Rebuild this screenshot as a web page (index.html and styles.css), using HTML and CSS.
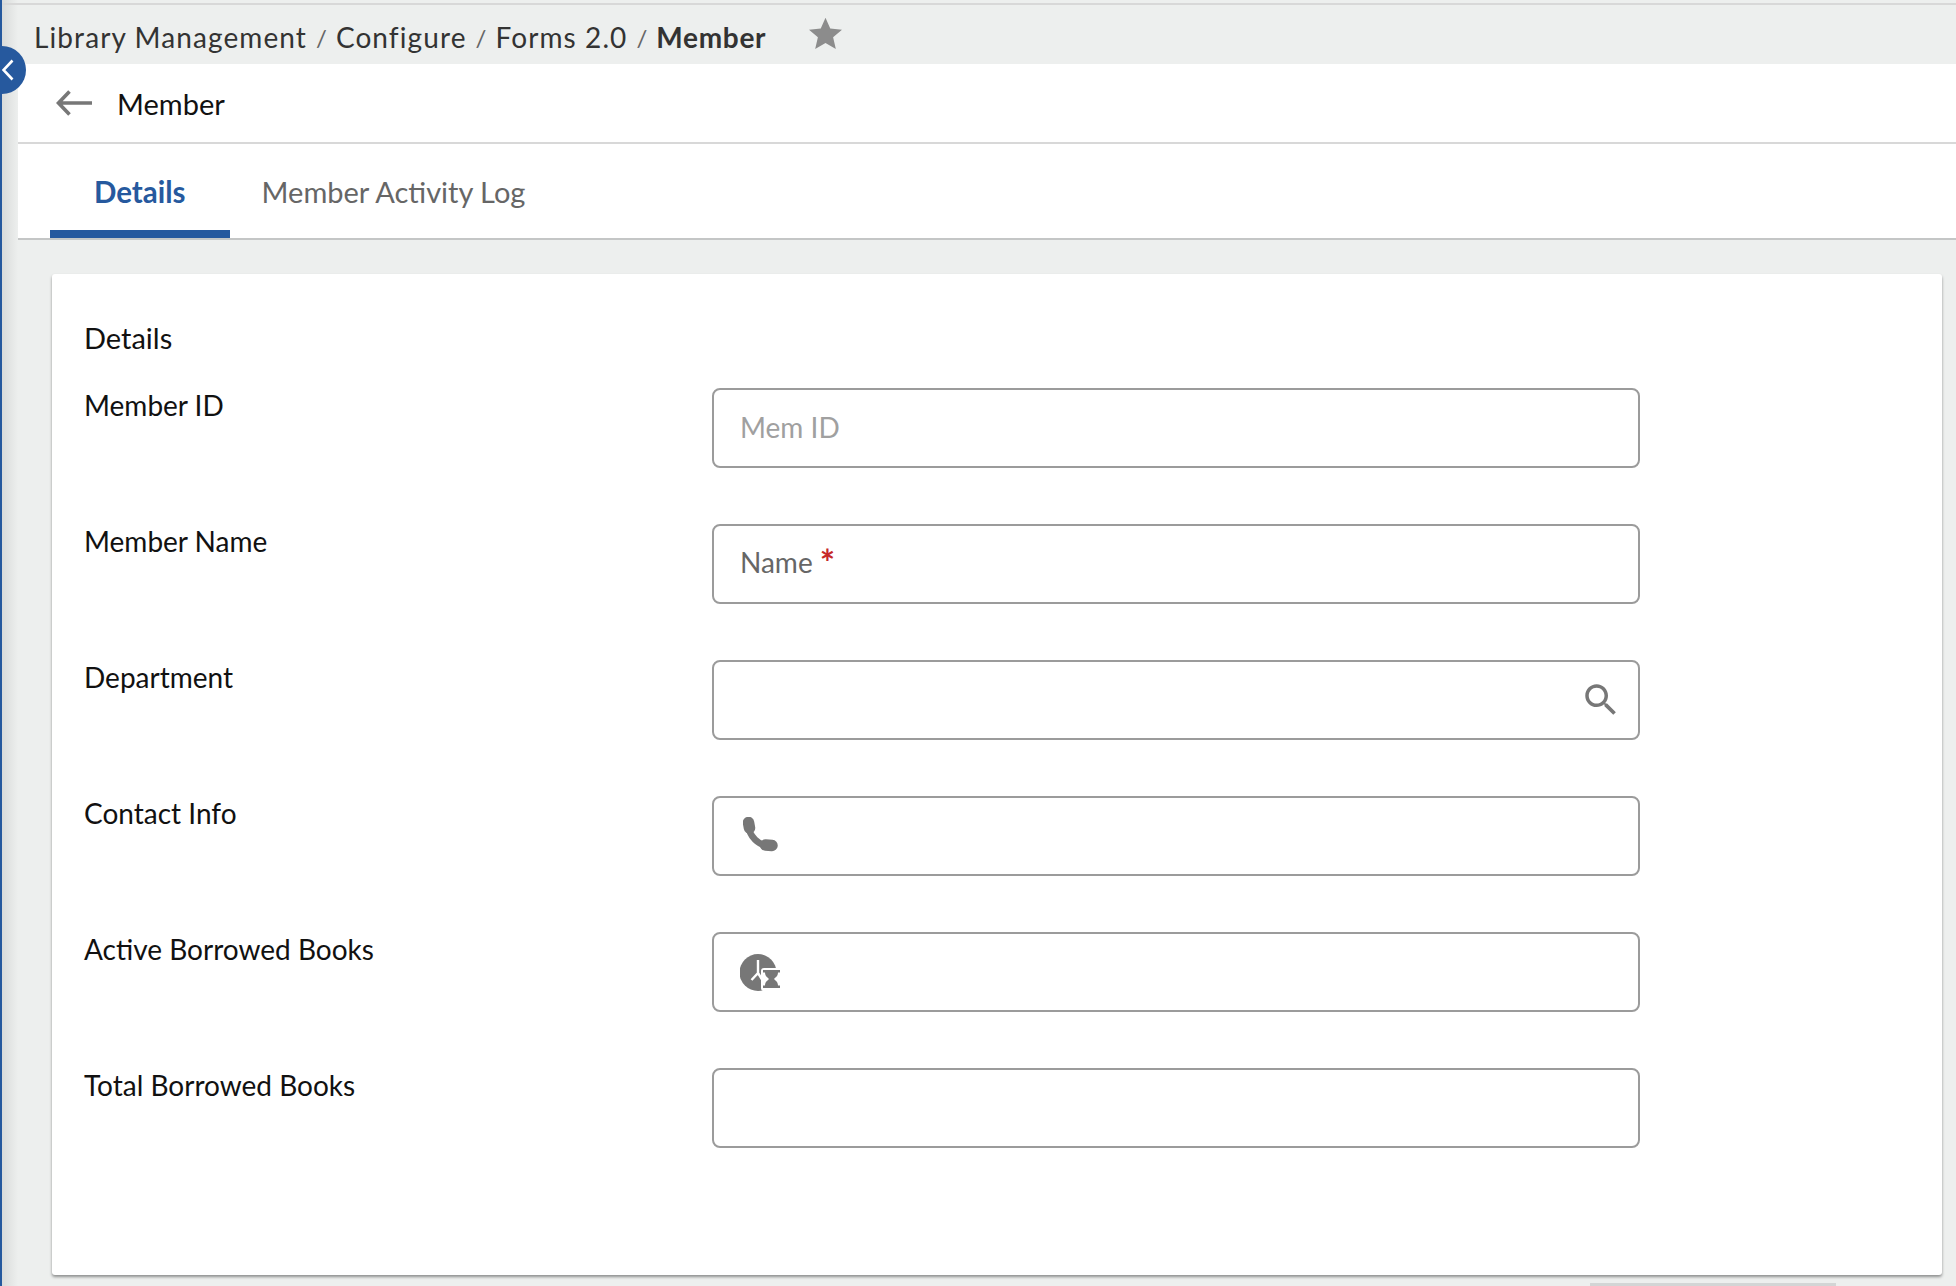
FILE: index.html
```html
<!DOCTYPE html>
<html lang="en">
<head>
    <meta charset="UTF-8">
    <title>Member</title>
    <link rel="stylesheet" href="styles.css">
</head>
<body>

<div class="shell">
    <div class="rail"></div>
    <button class="rail-toggle" type="button" aria-label="Collapse">
        <svg width="12" height="22" viewBox="0 0 12 22"><path d="M10.5 1.5 1.5 11l9 9.5" fill="none" stroke="#fff" stroke-width="2.6"/></svg>
    </button>

    <div class="content">
        <div class="breadcrumb">
            <span class="crumb">Library Management</span>
            <span class="crumb-sep">/</span>
            <span class="crumb">Configure</span>
            <span class="crumb-sep">/</span>
            <span class="crumb">Forms 2.0</span>
            <span class="crumb-sep">/</span>
            <span class="crumb crumb--current">Member</span>
            <svg class="star" width="35" height="33" viewBox="0 0 24 23"><path d="M12 0.5l3.3 7.6 8.2.7-6.2 5.4 1.9 8.1L12 18.1l-7.2 4.2 1.9-8.1L.5 8.8l8.2-.7z" fill="#8c8c8c"/></svg>
        </div>

        <div class="page">
            <div class="page-title">
                <svg class="back" width="36" height="26" viewBox="0 0 36 26"><path d="M36 13H3M13.5 1.500 2.500 13l11 11.500" fill="none" stroke="#777" stroke-width="3.6"/></svg>
                <span>Member</span>
            </div>
            <div class="tabs">
                <div class="tab tab--active">Details</div>
                <div class="tab">Member Activity Log</div>
            </div>
        </div>

        <div class="card">
            <div class="section-title">Details</div>

            <div class="form-row">
                <label class="form-label">Member ID</label>
                <div class="field"><input class="field-input" type="text" placeholder="Mem ID"></div>
            </div>
            <div class="form-row">
                <label class="form-label">Member Name</label>
                <div class="field"><span class="field-hint">Name</span><span class="required">*</span></div>
            </div>
            <div class="form-row">
                <label class="form-label">Department</label>
                <div class="field">
                    <input class="field-input" type="text">
                    <svg class="icon-search" width="42" height="42" viewBox="0 0 24 24"><path fill="#777" d="M15.5 14h-.79l-.28-.27C15.41 12.59 16 11.11 16 9.5 16 5.91 13.09 3 9.5 3S3 5.91 3 9.5 5.91 16 9.5 16c1.61 0 3.09-.59 4.23-1.57l.27.28v.79l5 4.99L20.49 19l-4.99-5zm-6 0C7.01 14 5 11.99 5 9.5S7.01 5 9.5 5 14 7.01 14 9.5 11.99 14 9.5 14z"/></svg>
                </div>
            </div>
            <div class="form-row">
                <label class="form-label">Contact Info</label>
                <div class="field">
                    <svg class="icon-phone" width="35" height="35" viewBox="0 0 35 35">
                        <path d="M5.500 8C6 19 15 29 28 29" fill="none" stroke="#777" stroke-width="6.500"/>
                        <path d="M5.500 5.500 6.500 11M22.500 28l6.500.5" fill="none" stroke="#777" stroke-width="11.500" stroke-linecap="round"/>
                    </svg>
                </div>
            </div>
            <div class="form-row">
                <label class="form-label">Active Borrowed Books</label>
                <div class="field">
                    <svg class="icon-pending" width="43" height="37" viewBox="0 0 43 37">
                        <circle cx="18" cy="18.500" r="18.500" fill="#777"/>
                        <rect x="21" y="14" width="22" height="23" rx="3" fill="#fff"/>
                        <path d="M18 6v13L11.500 26M18 19l5 8" fill="none" stroke="#fff" stroke-width="2.400"/>
                        <path d="M23 16h17v2.500h-2c0 4-3 5-4 6.500 1 1.500 4 2.500 4 6.500h2V34H23v-2.500h2c0-4 3-5 4-6.500-1-1.500-4-2.500-4-6.500h-2z" fill="#777"/>
                    </svg>
                </div>
            </div>
            <div class="form-row">
                <label class="form-label">Total Borrowed Books</label>
                <div class="field"><input class="field-input" type="text"></div>
            </div>
        </div>
    </div>
</div>

<div class="peek"></div>

</body>
</html>
```

FILE: styles.css
```css
html, body {
    margin: 0;
    height: 1286px;
    overflow: hidden;
    background-color: #edefee;
    font-family: "Lato", "Liberation Sans", sans-serif;
}
.shell {
    display: flex;
    position: relative;
    height: 1286px;
}
.rail {
    width: 2px;
    flex: none;
    background-color: #26599e;
}
.rail-toggle {
    position: absolute;
    left: -22px;
    top: 46px;
    z-index: 2;
    width: 48px;
    height: 48px;
    padding: 0 0 0 24px;
    border: 0;
    border-radius: 50%;
    background-color: #26599e;
    display: flex;
    align-items: center;
}
.content {
    flex: 1;
    min-width: 0;
    background: linear-gradient(to right, #d9dbda 0, #edefee 16px);
}

.breadcrumb {
    height: 61px;
    margin-top: 3px;
    padding: 5px 0 0 32px;
    display: flex;
    align-items: center;
    gap: 9px;
    border-top: 2px solid #d8d8d8;
    box-sizing: border-box;
    font-size: 28px;
    letter-spacing: 1.1px;
    color: #333;
}
.crumb-sep {
    color: #666;
    font-size: 24px;
    letter-spacing: 0;
}
.crumb--current {
    font-weight: 700;
    letter-spacing: 0.7px;
}
.star {
    margin-left: 33px;
    margin-bottom: 8px;
}

.page {
    margin-left: 16px;
    background-color: #fff;
}
.page-title {
    height: 80px;
    box-sizing: border-box;
    display: flex;
    align-items: center;
    gap: 25px;
    padding-left: 38px;
    border-bottom: 2px solid #d8d8d8;
    font-size: 29px;
    color: #111;
}
.tabs {
    height: 96px;
    box-sizing: border-box;
    display: flex;
    padding-left: 32px;
    border-bottom: 2px solid #c4c6c6;
}
.tab {
    padding: 0 32px;
    line-height: 96px;
    font-size: 29px;
    color: #666;
}
.tab--active {
    padding: 0 44px;
    font-size: 29.5px;
    font-weight: 700;
    color: #26599e;
    border-bottom: 8px solid #26599e;
}

.card {
    margin: 34px 14px 0 50px;
    height: 1001px;
    box-sizing: border-box;
    padding: 47px 32px 0;
    background-color: #fff;
    box-shadow: 0 2px 3px rgba(0, 0, 0, 0.4);
    border-radius: 3px;
}
.section-title {
    font-size: 29px;
    line-height: 34px;
    color: #111;
}
.form-row {
    display: flex;
    height: 136px;
}
.section-title + .form-row {
    margin-top: 33px;
}
.form-label {
    width: 628px;
    flex: none;
    font-size: 28px;
    line-height: 34px;
    color: #111;
}
.field {
    width: 928px;
    height: 80px;
    box-sizing: border-box;
    padding: 0 26px;
    display: flex;
    align-items: center;
    border: 2px solid #9b9b9b;
    border-radius: 8px;
}
.field-input {
    flex: 1;
    min-width: 0;
    border: 0;
    padding: 0 0 2px;
    outline: 0;
    font: inherit;
    font-size: 28px;
    color: #333;
}
.field-input::placeholder {
    color: #a0a0a0;
    opacity: 1;
}
.field-hint {
    padding-bottom: 4px;
    font-size: 28px;
    color: #666;
}
.required {
    align-self: flex-start;
    margin: 16px 0 0 7px;
    font-size: 36px;
    line-height: 40px;
    font-weight: 700;
    color: #c62828;
}
.icon-search {
    margin-right: -10px;
}
.icon-phone {
    margin-left: 3px;
    margin-bottom: 3px;
}

.peek {
    position: absolute;
    left: 1590px;
    top: 1283px;
    width: 246px;
    height: 3px;
    background-color: #d3d5d5;
}
```
